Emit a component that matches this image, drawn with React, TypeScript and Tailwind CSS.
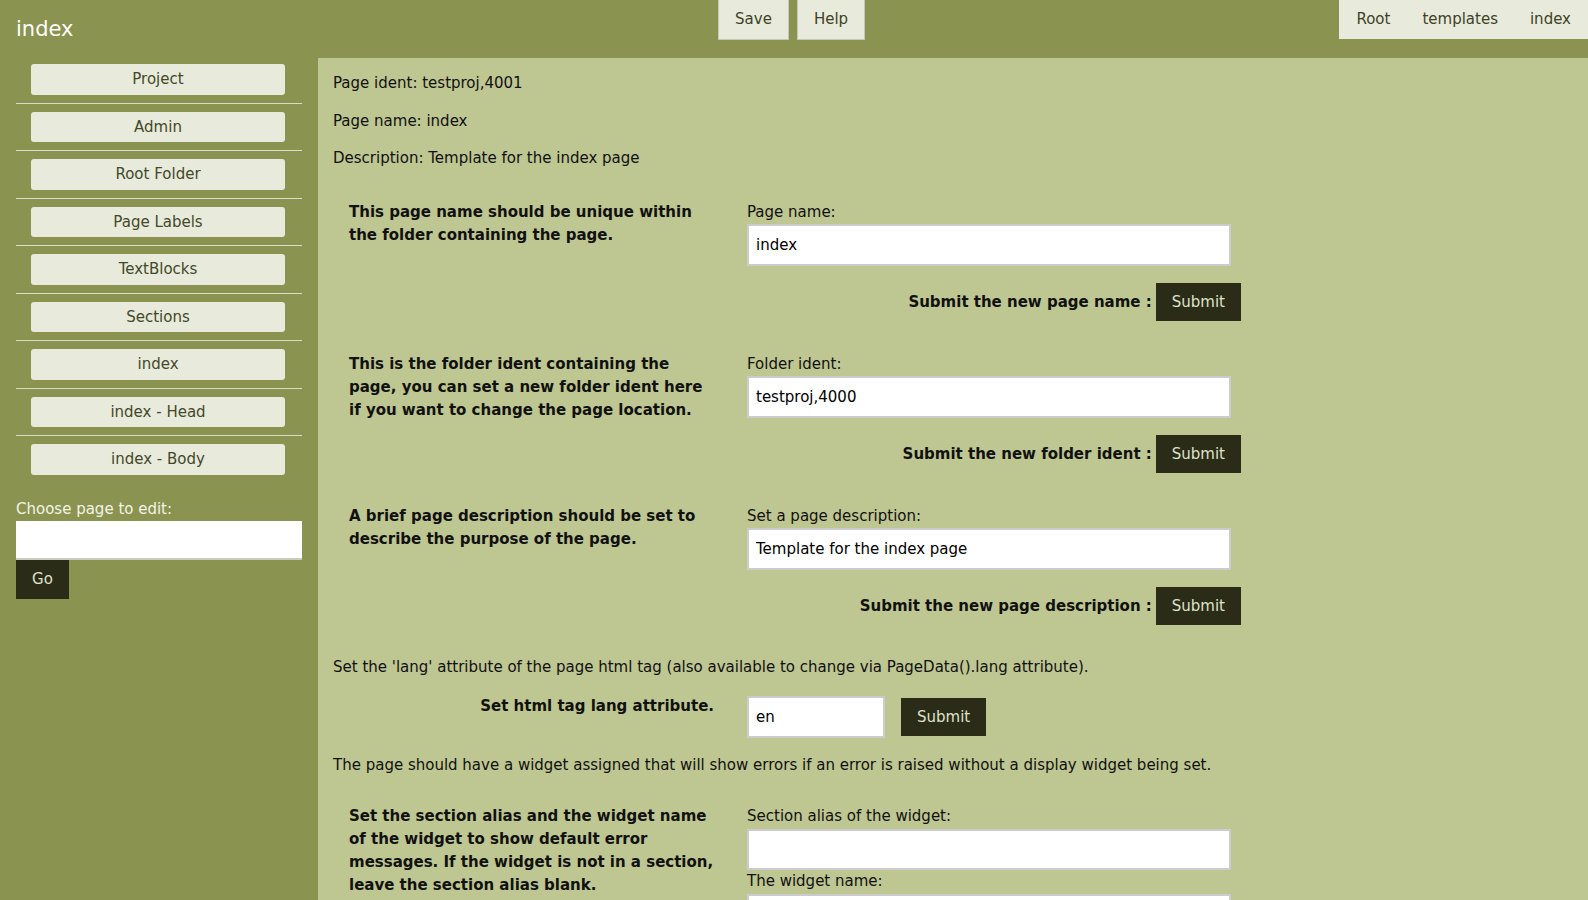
import React from 'react';

const navItems = [
  'Project',
  'Admin',
  'Root Folder',
  'Page Labels',
  'TextBlocks',
  'Sections',
  'index',
  'index - Head',
  'index - Body',
];

const font = { fontFamily: '"DejaVu Sans", "Liberation Sans", sans-serif' };

function SubmitButton() {
  return (
    <button className="h-[37.5px] px-4 bg-[#2a2c17] text-[#dfe2c9] text-[15px]">Submit</button>
  );
}

function FieldSection({
  help,
  label,
  value,
  submitLabel,
}: {
  help: string;
  label: string;
  value: string;
  submitLabel: string;
}) {
  return (
    <div className="flex py-4 pl-4">
      <div className="w-[368px] font-bold leading-[23px]">{help}</div>
      <div className="ml-[30px] w-[494px]">
        <div className="h-[23.5px] leading-[23.5px]">{label}</div>
        <input
          defaultValue={value}
          className="block w-[484px] h-[41.5px] border-2 border-[#cccccc] bg-white px-[7px] text-black outline-none"
        />
        <div className="mt-[17.5px] flex items-center justify-end gap-1">
          <span className="font-bold">{submitLabel}</span>
          <SubmitButton />
        </div>
      </div>
    </div>
  );
}

export default function App() {
  return (
    <div className="min-h-[900px] bg-[#8a934f] text-[15px] text-[#111]" style={font}>
      {/* Header */}
      <div className="flex h-[58px] items-start">
        <div className="w-[718px] pl-4 pt-[16px] text-[21px] leading-[27px] text-white">index</div>
        <div className="flex gap-2">
          <button className="h-[40px] w-[71px] border border-t-0 border-[#c5c7bb] bg-[#e8ebdb] text-[#3d4226]">
            Save
          </button>
          <button className="h-[40px] w-[68px] border border-t-0 border-[#c5c7bb] bg-[#e8ebdb] text-[#3d4226]">
            Help
          </button>
        </div>
        <div className="flex-1" />
        <div className="flex h-[39px] items-center bg-[#e8ebdb] px-[1px] text-[#3d4226]">
          <a className="px-4">Root</a>
          <a className="px-4">templates</a>
          <a className="px-4">index</a>
        </div>
      </div>

      <div className="flex">
        {/* Sidebar */}
        <div className="w-[318px] shrink-0 px-4">
          <ul className="-mt-[2px]">
            {navItems.map((item, i) => (
              <li
                key={item}
                className={
                  'py-2 ' + (i < navItems.length - 1 ? 'border-b border-[#d9dcc6]' : '')
                }
              >
                <button className="ml-[15px] block h-[30.5px] w-[254px] rounded-[3px] bg-[#e8ebdb] text-[#434829]">
                  {item}
                </button>
              </li>
            ))}
          </ul>
          <div className="mt-[15px] leading-[23px] text-[#f2f3e8]">Choose page to edit:</div>
          <input className="block h-[39px] w-[286px] border-b-2 border-[#c9cbc0] bg-white outline-none" />
          <button className="h-[39px] w-[53px] bg-[#2a2c17] text-[#dfe2c9]">Go</button>
        </div>

        {/* Main content */}
        <div className="flex-1 bg-[#bec691] pl-[15px] min-h-[842px] leading-[22.5px]">
          <p className="mt-[14px] mb-[15px]">Page ident: testproj,4001</p>
          <p className="mb-[15px]">Page name: index</p>
          <p>Description: Template for the index page</p>

          <div className="mt-[15px]">
            <FieldSection
              help="This page name should be unique within the folder containing the page."
              label="Page name:"
              value="index"
              submitLabel="Submit the new page name :"
            />
            <FieldSection
              help="This is the folder ident containing the page, you can set a new folder ident here if you want to change the page location."
              label="Folder ident:"
              value="testproj,4000"
              submitLabel="Submit the new folder ident :"
            />
            <FieldSection
              help="A brief page description should be set to describe the purpose of the page."
              label="Set a page description:"
              value="Template for the index page"
              submitLabel="Submit the new page description :"
            />
          </div>

          <p className="mt-[15px]">
            Set the 'lang' attribute of the page html tag (also available to change via PageData().lang attribute).
          </p>

          <div className="flex items-start pl-4 pt-[17px]">
            <div className="w-[365px] text-right font-bold leading-[23px]">
              Set html tag lang attribute.
            </div>
            <div className="ml-[33px] flex items-start">
              <input
                defaultValue="en"
                className="mt-[1px] block h-[41.5px] w-[138px] border-2 border-[#cccccc] bg-white px-[7px] text-black outline-none"
              />
              <div className="ml-[16px] mt-[3px]">
                <SubmitButton />
              </div>
            </div>
          </div>

          <p className="mt-[16px]">
            The page should have a widget assigned that will show errors if an error is raised without a display widget being set.
          </p>

          <div className="flex pl-4 pt-[29px]">
            <div className="w-[368px] font-bold leading-[23px]">
              Set the section alias and the widget name of the widget to show default error messages. If the widget is not in a section, leave the section alias blank.
            </div>
            <div className="ml-[30px] w-[494px]">
              <div className="h-[23.5px] leading-[23.5px]">Section alias of the widget:</div>
              <input className="block h-[41.5px] w-[484px] border-2 border-[#cccccc] bg-white px-[7px] outline-none" />
              <div className="h-[23.5px] leading-[23.5px]">The widget name:</div>
              <input className="block h-[41.5px] w-[484px] border-2 border-[#cccccc] bg-white px-[7px] outline-none" />
            </div>
          </div>
        </div>
      </div>
    </div>
  );
}
